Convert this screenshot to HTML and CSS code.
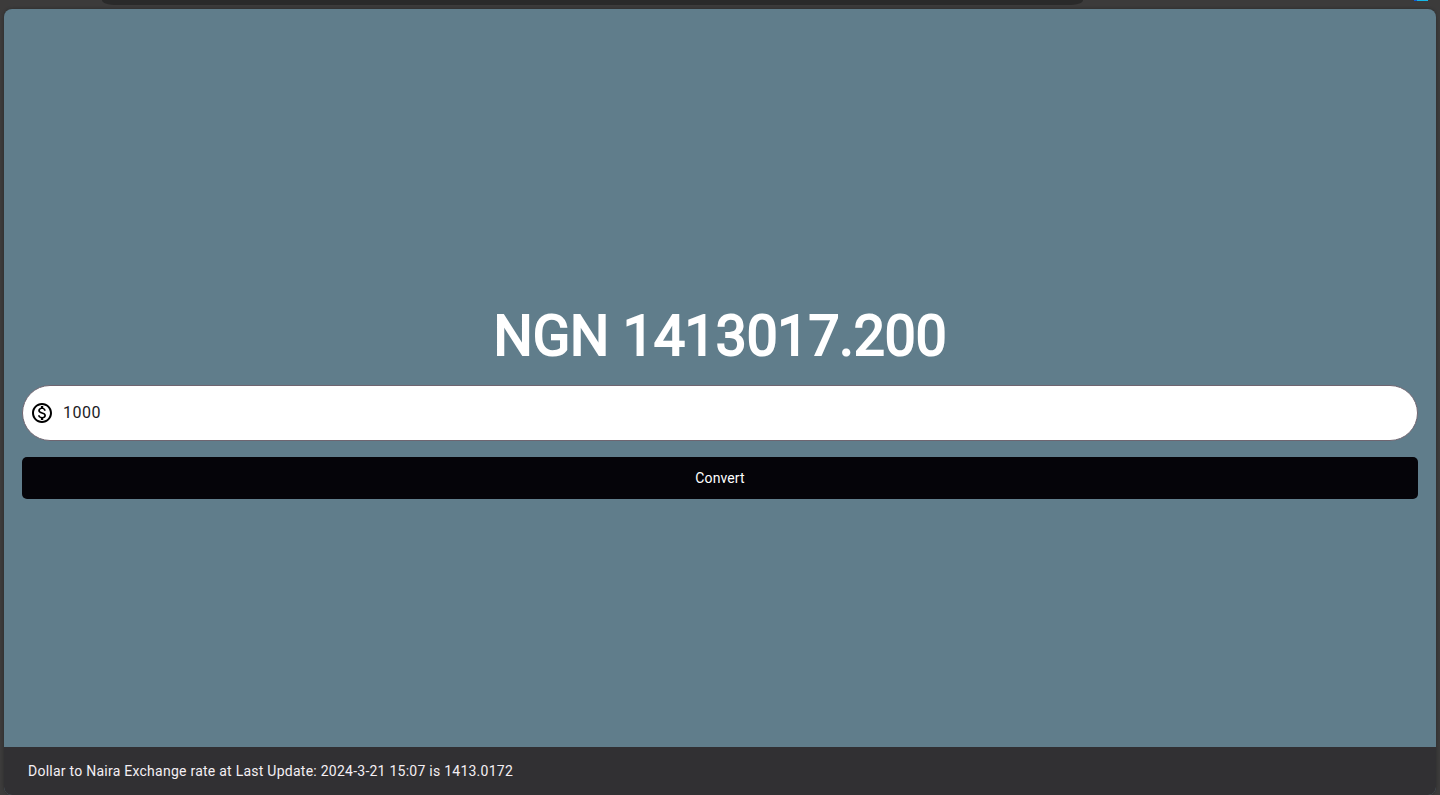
FILE: index.html
```
<!DOCTYPE html>
<html lang="en">
<head>
<meta charset="utf-8">
<title>Currency Converter</title>
<link rel="stylesheet" href="styles.css">
</head>
<body>
<div class="toolbar"><div class="address-bar"></div><div class="profile"></div></div>
<div class="window">
  <main class="converter">
    <h1 class="result">NGN 1413017.200</h1>
    <form class="form">
      <label class="amount">
        <svg class="amount-icon" viewBox="0 0 24 24" role="img" aria-label="Amount in dollars"><path fill="currentColor" d="M12 2C6.48 2 2 6.48 2 12s4.48 10 10 10 10-4.48 10-10S17.52 2 12 2zm0 18c-4.41 0-8-3.59-8-8s3.59-8 8-8 8 3.59 8 8-3.59 8-8 8zm.31-8.86c-1.77-.45-2.34-.94-2.34-1.67 0-.84.79-1.43 2.1-1.43 1.38 0 1.9.66 1.94 1.64h1.71c-.05-1.34-.87-2.57-2.49-2.97V5H10.9v1.69c-1.51.32-2.72 1.3-2.72 2.81 0 1.79 1.49 2.69 3.66 3.21 1.95.46 2.34 1.15 2.34 1.87 0 .53-.39 1.39-2.1 1.39-1.6 0-2.23-.72-2.32-1.64H8.04c.1 1.7 1.36 2.66 2.86 2.97V19h2.34v-1.67c1.52-.29 2.72-1.16 2.73-2.77-.01-2.2-1.9-2.96-3.66-3.42z"/></svg>
        <input class="amount-input" type="text" inputmode="decimal" value="1000">
      </label>
      <button class="convert" type="button">Convert</button>
    </form>
  </main>
  <footer class="snackbar">Dollar to Naira Exchange rate at Last Update: 2024-3-21 15:07 is 1413.0172</footer>
</div>
</body>
</html>
```
FILE: styles.css
```
* { box-sizing: border-box; }
body {
  margin: 0;
  min-height: 100vh;
  display: flex;
  flex-direction: column;
  background: #3c3b3b;
  font-family: Roboto, sans-serif;
}
.toolbar {
  height: 9px;
  padding: 0 12px 0 102px;
  display: flex;
  align-items: flex-start;
  justify-content: space-between;
}
.address-bar {
  width: 74%;
  height: 5px;
  background: #2a2a2a;
  border-radius: 0 0 12px 12px / 0 0 5px 5px;
}
.profile {
  width: 14px;
  height: 1px;
  background: linear-gradient(90deg, #1558d6 3px, #16b9e8 3px);
}
.window {
  position: relative;
  flex: 1;
  display: flex;
  flex-direction: column;
  margin: 0 4px;
  border-radius: 8px;
  overflow: hidden;
  background: #607d8b;
  box-shadow: 0 0 3px #2a2a2a;
}
.converter {
  flex: 1;
  display: flex;
  flex-direction: column;
  justify-content: center;
  padding: 0 18px;
}
.result {
  margin: 0 0 18px;
  font-size: 55px;
  line-height: 62px;
  font-weight: 400;
  text-align: center;
  color: #fff;
  -webkit-text-stroke: 2px #fff;
}
.form {
  display: flex;
  flex-direction: column;
  gap: 16px;
}
.amount {
  display: flex;
  align-items: center;
  gap: 9px;
  height: 56px;
  padding: 0 7px;
  border: 1px solid #6f6570;
  border-radius: 28px;
  background: #fff;
  color: #000;
}
.amount-icon { width: 24px; height: 24px; flex: none; }
.amount-input {
  flex: 1;
  min-width: 0;
  padding: 0;
  border: 0;
  outline: 0;
  background: none;
  color: #1c1b1f;
  font: 400 16px/24px Roboto, sans-serif;
  letter-spacing: 0.5px;
}
.convert {
  height: 42px;
  border: 0;
  border-radius: 5px;
  background: #050409;
  color: #fff;
  font: 400 14px/20px Roboto, sans-serif;
  letter-spacing: 0.1px;
}
.snackbar {
  position: absolute;
  inset: auto 0 0;
  padding: 14px 24px;
  background: #313033;
  color: #f4eff4;
  font-size: 14px;
  line-height: 20px;
  font-weight: 400;
  letter-spacing: 0.25px;
}
```
